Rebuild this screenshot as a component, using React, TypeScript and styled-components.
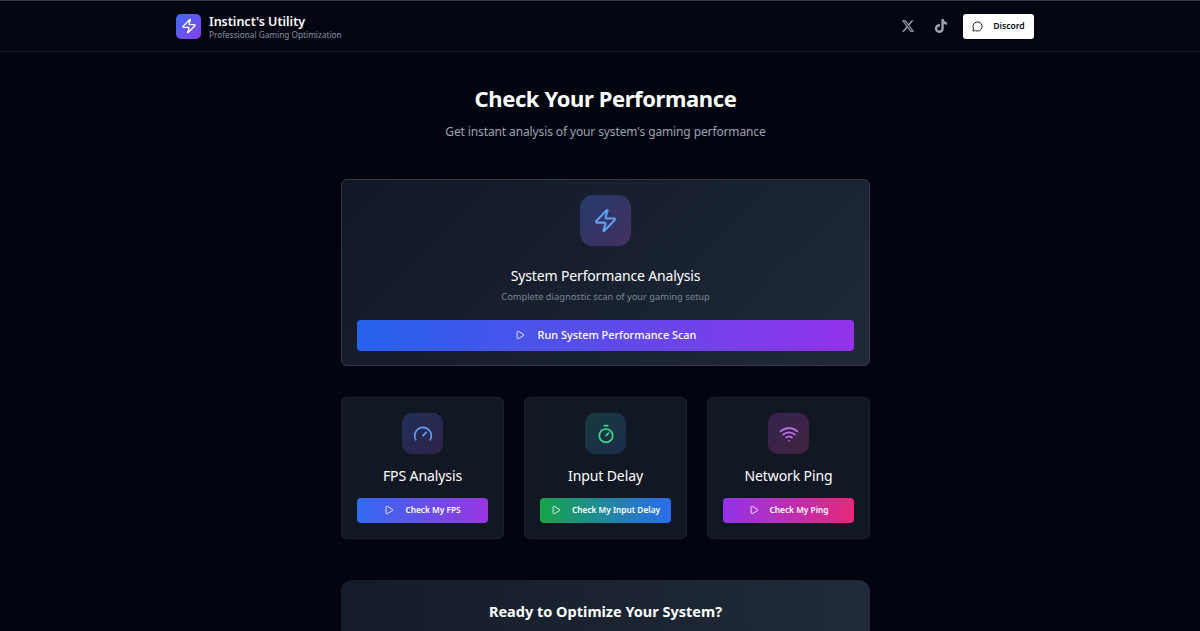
import React from "react";
import styled, { createGlobalStyle } from "styled-components";
import { Gauge, MessageCircle, Play, Timer, Wifi, Zap } from "lucide-react";
import { FaTiktok, FaXTwitter } from "react-icons/fa6";

const GlobalStyle = createGlobalStyle`
  html, body {
    margin: 0;
    height: 631px;
    overflow: hidden;
    background: #020510;
    font-family: "Noto Sans", "Open Sans", sans-serif;
    color: #fff;
  }
  * {
    box-sizing: border-box;
  }
`;

// the reference page is a little wider than the window, so its centre sits at 605px
const Page = styled.div`
  width: 1211px;
  height: 631px;
  overflow: hidden;
`;

const Header = styled.header`
  height: 52px;
  background: #030611;
  border-top: 1px solid #343944;
  border-bottom: 1px solid #171b26;
`;

const HeaderInner = styled.div`
  width: 858px;
  height: 50px;
  margin-left: 176px;
  display: flex;
  align-items: center;
  justify-content: space-between;
`;

const Brand = styled.div`
  display: flex;
  align-items: center;
  gap: 8px;
`;

const BrandLogo = styled.div`
  width: 25px;
  height: 25px;
  border-radius: 5px;
  background: linear-gradient(135deg, #3b6cf4, #8b3fe8);
  display: flex;
  align-items: center;
  justify-content: center;
`;

const BrandText = styled.div`
  padding-top: 2px;
  display: flex;
  flex-direction: column;
`;

const BrandName = styled.div`
  font-size: 12.5px;
  line-height: 15px;
  font-weight: 600;
`;

const BrandTagline = styled.div`
  font-size: 8.25px;
  line-height: 12px;
  color: #8b93a3;
`;

const Socials = styled.nav`
  display: flex;
  align-items: center;
`;

const SocialLink = styled.a`
  width: 33px;
  display: flex;
  justify-content: center;
  color: #9ca3af;
`;

const DiscordButton = styled.button`
  width: 71px;
  height: 25px;
  margin-left: 6px;
  padding: 0;
  border: 0;
  border-radius: 3px;
  background: #fff;
  color: #0b0f19;
  font: 600 8.6px "Noto Sans", sans-serif;
  display: flex;
  align-items: center;
  justify-content: center;
  gap: 10px;
`;

const Main = styled.main`
  width: 529px;
  margin: 0 auto;
`;

const Hero = styled.section`
  padding-top: 30px;
  text-align: center;
`;

const Title = styled.h1`
  margin: 0;
  font-size: 22px;
  line-height: 32px;
  font-weight: 700;
  letter-spacing: -0.4px;
`;

const Subtitle = styled.p`
  margin: 9px 0 0;
  font-size: 12px;
  line-height: 18px;
  letter-spacing: -0.12px;
  color: #9ca3af;
`;

const ScanCard = styled.section`
  height: 187px;
  margin-top: 38px;
  padding: 15px;
  border: 1px solid #313946;
  border-radius: 6px;
  background: linear-gradient(135deg, #111827, #1f2937);
  display: flex;
  flex-direction: column;
  align-items: center;
`;

const IconTile = styled.div<{ $size: number; $from: string; $to: string }>`
  width: ${(p) => p.$size}px;
  height: ${(p) => p.$size}px;
  flex: none;
  border-radius: ${(p) => (p.$size > 45 ? 13 : 10)}px;
  background: linear-gradient(135deg, ${(p) => p.$from}, ${(p) => p.$to});
  display: flex;
  align-items: center;
  justify-content: center;
`;

const ScanTitle = styled.h2`
  margin: 20px 0 0;
  font-size: 14px;
  line-height: 20px;
  font-weight: 400;
  letter-spacing: -0.15px;
`;

const ScanText = styled.p`
  margin: 4px 0 0;
  font-size: 9.3px;
  line-height: 13px;
  color: #7d8593;
`;

const ActionButton = styled.button<{ $from: string; $to: string; $wide?: boolean }>`
  width: 100%;
  height: ${(p) => (p.$wide ? 31 : 25)}px;
  padding: 0 0 2px;
  border: 0;
  border-radius: 4px;
  background: linear-gradient(90deg, ${(p) => p.$from}, ${(p) => p.$to});
  color: #fff;
  font-family: "Noto Sans", sans-serif;
  font-size: ${(p) => (p.$wide ? 10.9 : 8.3)}px;
  font-weight: ${(p) => (p.$wide ? 500 : 600)};
  display: flex;
  align-items: center;
  justify-content: center;
  gap: ${(p) => (p.$wide ? 13 : 11)}px;
`;

const ScanAction = styled.div`
  width: 100%;
  margin-top: 17px;
`;

const CheckGrid = styled.section`
  margin-top: 31px;
  display: grid;
  grid-template-columns: repeat(3, 163px);
  justify-content: space-between;
`;

const CheckCard = styled.article`
  height: 142px;
  padding: 15px;
  border: 1px solid #1a2230;
  border-radius: 6px;
  background: #111824;
  display: flex;
  flex-direction: column;
  align-items: center;
`;

const CheckTitle = styled.h3`
  margin: 12px 0 0;
  font-size: 14px;
  line-height: 20px;
  font-weight: 400;
  letter-spacing: -0.1px;
`;

const CheckAction = styled.div`
  width: 100%;
  margin-top: 12px;
`;

const CtaCard = styled.section`
  height: 120px;
  margin-top: 41px;
  padding-top: 20px;
  border-radius: 12px;
  background: linear-gradient(90deg, #141c29, #212a38);
  text-align: center;
`;

const CtaTitle = styled.h2`
  margin: 0;
  font-size: 14.5px;
  line-height: 22px;
  font-weight: 700;
`;

const checks = [
  {
    title: "FPS Analysis",
    label: "Check My FPS",
    Icon: Gauge,
    color: "#5fa0f5",
    tile: ["#1f2f58", "#2f2348"],
    button: ["#2f6bf0", "#9a35e2"],
  },
  {
    title: "Input Delay",
    label: "Check My Input Delay",
    Icon: Timer,
    color: "#42d68a",
    tile: ["#163a3c", "#1b2c4c"],
    button: ["#16a34a", "#2b6cf0"],
  },
  {
    title: "Network Ping",
    label: "Check My Ping",
    Icon: Wifi,
    color: "#bd75ee",
    tile: ["#33234f", "#43233f"],
    button: ["#9333ea", "#e6287a"],
  },
];

export default function App() {
  return (
    <Page>
      <GlobalStyle />
      <Header>
        <HeaderInner>
          <Brand>
            <BrandLogo>
              <Zap size={16} color="#fff" strokeWidth={2} />
            </BrandLogo>
            <BrandText>
              <BrandName>Instinct's Utility</BrandName>
              <BrandTagline>Professional Gaming Optimization</BrandTagline>
            </BrandText>
          </Brand>
          <Socials>
            <SocialLink>
              <FaXTwitter size={14} />
            </SocialLink>
            <SocialLink>
              <FaTiktok size={14} />
            </SocialLink>
            <DiscordButton>
              <MessageCircle size={11} strokeWidth={2} />
              Discord
            </DiscordButton>
          </Socials>
        </HeaderInner>
      </Header>
      <Main>
        <Hero>
          <Title>Check Your Performance</Title>
          <Subtitle>Get instant analysis of your system's gaming performance</Subtitle>
        </Hero>
        <ScanCard>
          <IconTile $size={51} $from="#243a6b" $to="#43305f">
            <Zap size={25} color="#5fa0f5" strokeWidth={2} />
          </IconTile>
          <ScanTitle>System Performance Analysis</ScanTitle>
          <ScanText>Complete diagnostic scan of your gaming setup</ScanText>
          <ScanAction>
            <ActionButton $wide $from="#2563eb" $to="#9333ea">
              <Play size={10} strokeWidth={2} />
              Run System Performance Scan
            </ActionButton>
          </ScanAction>
        </ScanCard>
        <CheckGrid>
          {checks.map(({ title, label, Icon, color, tile, button }) => (
            <CheckCard key={title}>
              <IconTile $size={41} $from={tile[0]} $to={tile[1]}>
                <Icon size={20} color={color} strokeWidth={2} />
              </IconTile>
              <CheckTitle>{title}</CheckTitle>
              <CheckAction>
                <ActionButton $from={button[0]} $to={button[1]}>
                  <Play size={10} strokeWidth={2} />
                  {label}
                </ActionButton>
              </CheckAction>
            </CheckCard>
          ))}
        </CheckGrid>
        <CtaCard>
          <CtaTitle>Ready to Optimize Your System?</CtaTitle>
        </CtaCard>
      </Main>
    </Page>
  );
}
